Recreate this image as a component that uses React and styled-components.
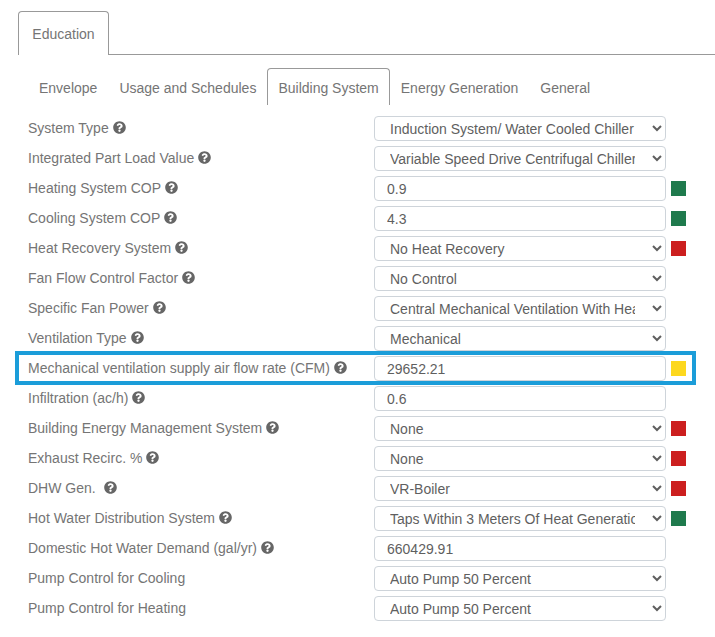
import React from 'react'
import styled, { createGlobalStyle } from 'styled-components'
import { FaQuestionCircle } from 'react-icons/fa'

const GlobalStyle = createGlobalStyle`
  html, body {
    margin: 0;
    background: #fff;
    font-family: "Liberation Sans", Arial, sans-serif;
  }
`

const rows = [
  { label: 'System Type', help: true, select: 'Induction System/ Water Cooled Chiller' },
  { label: 'Integrated Part Load Value', help: true, select: 'Variable Speed Drive Centrifugal Chiller' },
  { label: 'Heating System COP', help: true, value: '0.9', status: 'green' },
  { label: 'Cooling System COP', help: true, value: '4.3', status: 'green' },
  { label: 'Heat Recovery System', help: true, select: 'No Heat Recovery', status: 'red' },
  { label: 'Fan Flow Control Factor', help: true, select: 'No Control' },
  { label: 'Specific Fan Power', help: true, select: 'Central Mechanical Ventilation With Heat Recovery' },
  { label: 'Ventilation Type', help: true, select: 'Mechanical' },
  { label: 'Mechanical ventilation supply air flow rate (CFM)', help: true, value: '29652.21', status: 'yellow', marked: true },
  { label: 'Infiltration (ac/h)', help: true, value: '0.6' },
  { label: 'Building Energy Management System', help: true, select: 'None', status: 'red' },
  { label: 'Exhaust Recirc. %', help: true, select: 'None', status: 'red' },
  { label: 'DHW Gen.', help: true, wide: true, select: 'VR-Boiler', status: 'red' },
  { label: 'Hot Water Distribution System', help: true, select: 'Taps Within 3 Meters Of Heat Generation', status: 'green' },
  { label: 'Domestic Hot Water Demand (gal/yr)', help: true, value: '660429.91' },
  { label: 'Pump Control for Cooling', select: 'Auto Pump 50 Percent' },
  { label: 'Pump Control for Heating', select: 'Auto Pump 50 Percent' },
]

const subTabs = ['Envelope', 'Usage and Schedules', 'Building System', 'Energy Generation', 'General']

const App = () => (
  <Page>
    <GlobalStyle />
    <MainTabs>
      <MainTab>Education</MainTab>
    </MainTabs>
    <SubTabs>
      {subTabs.map(tab => (
        <SubTab key={tab} $active={tab === 'Building System'}>{tab}</SubTab>
      ))}
    </SubTabs>
    <Form>
      {rows.map(row => (
        <Row key={row.label} $marked={row.marked}>
          <Label>
            {row.label}
            {row.help && <HelpIcon $wide={row.wide} />}
          </Label>
          {row.select ? (
            <Select defaultValue={row.select}>
              <option>{row.select}</option>
            </Select>
          ) : (
            <Input defaultValue={row.value} />
          )}
          {row.status && <Swatch $status={row.status} />}
        </Row>
      ))}
    </Form>
  </Page>
)

const statusColors = {
  green: '#1f7a4d',
  red: '#cc1f1f',
  yellow: '#fdd81e',
}

const Page = styled.div`
  width: 715px;
  height: 637px;
  overflow: hidden;
  padding-top: 11px;
  box-sizing: border-box;
  font-size: 14px;
  color: #757575;
`

const MainTabs = styled.div`
  display: flex;
  margin-left: 18px;
  height: 44px;
  box-sizing: border-box;
  border-bottom: 1px solid #999;
`

const MainTab = styled.div`
  width: 91px;
  height: 44px;
  box-sizing: border-box;
  padding-top: 14px;
  text-align: center;
  background: #fff;
  border: 1px solid #999;
  border-bottom: 0;
  border-radius: 4px 4px 0 0;
`

const SubTabs = styled.div`
  display: flex;
  height: 37px;
  margin: 13px 0 8px 28px;
`

const SubTab = styled.div`
  box-sizing: border-box;
  padding: 11px 10px 0;
  line-height: 16px;
  border: 1px solid ${props => (props.$active ? '#999' : 'transparent')};
  border-bottom: 0;
  border-radius: 4px 4px 0 0;
`

const Form = styled.div`
  display: flex;
  flex-direction: column;
`

const Row = styled.div`
  position: relative;
  display: flex;
  align-items: center;
  height: 30px;
  padding-left: 28px;

  ${props => props.$marked && `
    &::after {
      content: '';
      position: absolute;
      left: 15px;
      top: -2px;
      width: 681px;
      height: 34px;
      box-sizing: border-box;
      border: 4px solid #1b9dd9;
      pointer-events: none;
    }
  `}
`

const Label = styled.div`
  display: flex;
  align-items: center;
  width: 346px;
  flex: none;
  line-height: 16px;
  margin-top: -1px;
`

const HelpIcon = styled(FaQuestionCircle)`
  width: 13px;
  height: 13px;
  margin-left: ${props => (props.$wide ? '8px' : '4px')};
  color: #666;
`

const Select = styled.select`
  width: 292px;
  height: 25px;
  box-sizing: border-box;
  padding: 2px 14px 0 11px;
  font: inherit;
  color: #5f5f5f;
  background: #fff;
  border: 1px solid #ced4da;
  border-radius: 4px;
`

const Input = styled.input`
  width: 292px;
  height: 25px;
  box-sizing: border-box;
  padding: 1px 12px 0;
  font: inherit;
  color: #5f5f5f;
  background: #fff;
  border: 1px solid #ced4da;
  border-radius: 4px;
`

const Swatch = styled.span`
  width: 15px;
  height: 15px;
  margin-left: 5px;
  background: ${props => statusColors[props.$status]};
`

export default App
